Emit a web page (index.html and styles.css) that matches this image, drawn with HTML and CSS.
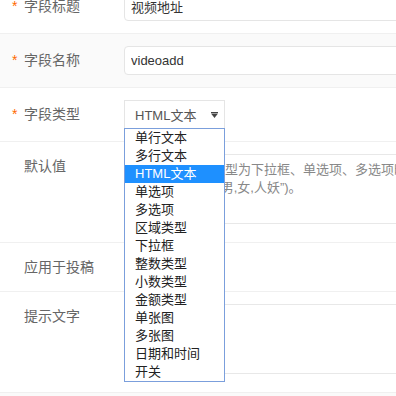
FILE: index.html
```html
<!DOCTYPE html>
<html lang="zh-CN">
<head>
<meta charset="UTF-8" />
<title>字段编辑</title>
<link rel="stylesheet" href="styles.css">
</head>
<body>

<div class="form">
  <div class="row first">
    <label class="lbl"><span class="req">*</span>字段标题</label>
    <div class="ctl"><input class="ipt" type="text" value="视频地址" /></div>
  </div>

  <div class="row alt">
    <label class="lbl"><span class="req">*</span>字段名称</label>
    <div class="ctl"><input class="ipt" type="text" value="videoadd" /></div>
  </div>

  <div class="row">
    <label class="lbl"><span class="req">*</span>字段类型</label>
    <div class="ctl">
      <div class="sel">
        <span class="sel-text">HTML文本</span>
        <svg class="sel-arrow" width="7" height="6" viewBox="0 0 7 6">
          <rect x="0" y="0" width="7" height="1" fill="#444" />
          <polygon points="0,1.5 7,1.5 3.5,6" fill="#444" />
        </svg>
        <ul class="options">
          <li>单行文本</li>
          <li>多行文本</li>
          <li class="active">HTML文本</li>
          <li>单选项</li>
          <li>多选项</li>
          <li>区域类型</li>
          <li>下拉框</li>
          <li>整数类型</li>
          <li>小数类型</li>
          <li>金额类型</li>
          <li>单张图</li>
          <li>多张图</li>
          <li>日期和时间</li>
          <li>开关</li>
        </ul>
      </div>
    </div>
  </div>

  <div class="row tall">
    <label class="lbl small">默认值</label>
    <div class="ctl">
      <textarea class="area" placeholder="例如：当字段类型为下拉框、单选项、多选项时&#10;用逗号分隔(如“男,女,人妖”)。"></textarea>
    </div>
  </div>

  <div class="row">
    <label class="lbl small">应用于投稿</label>
    <div class="ctl"><div class="blank"></div></div>
  </div>

  <div class="row tall">
    <label class="lbl small">提示文字</label>
    <div class="ctl"><textarea class="area"></textarea></div>
  </div>

  <div class="row alt">
    <label class="lbl small">&nbsp;</label>
    <div class="ctl"><div class="blank"></div></div>
  </div>
</div>

</body>
</html>
```

FILE: styles.css
```css
html, body {
  margin: 0;
  padding: 0;
  overflow: hidden;
  background: #fff;
}
body {
  font-family: "Liberation Sans", "Noto Sans CJK SC", sans-serif;
  font-size: 13px;
  color: #333;
}
.form {
  margin-top: -21px;
}
.row {
  display: flex;
  border-top: 1px solid #f0f0f0;
  padding: 12px 0;
}
.row.first {
  border-top: none;
  padding-top: 13px;
}
.row.alt {
  background: #fafafa;
}
.row.tall {
  padding-bottom: 18px;
}
.lbl {
  flex: 0 0 112px;
  padding-left: 12px;
  height: 29px;
  line-height: 29px;
  font-size: 14px;
  color: #666;
  white-space: nowrap;
}
.lbl.small {
  height: 24px;
  line-height: 24px;
}
.req {
  display: inline-block;
  width: 12px;
  color: #ff6a00;
  font-size: 14px;
}
.lbl.small {
  padding-left: 24px;
  flex-basis: 100px;
}
.ctl {
  flex: 1;
  min-width: 0;
}
.ipt {
  box-sizing: border-box;
  width: 400px;
  height: 29px;
  padding: 0 6px;
  border: 1px solid #e5e5e5;
  border-radius: 4px;
  background: #fff;
  font-family: inherit;
  font-size: 13px;
  color: #333;
  outline: none;
}
.sel {
  position: relative;
  box-sizing: border-box;
  width: 101px;
  height: 29px;
  border: 1px solid #e5e5e5;
  background: #fff;
  display: flex;
  align-items: center;
  padding-left: 10px;
  color: #555;
}
.sel-text {
  flex: 1;
}
.sel-arrow {
  margin-right: 6px;
}
.options {
  position: absolute;
  top: 27px;
  left: -1px;
  box-sizing: border-box;
  width: 101px;
  margin: 0;
  padding: 0;
  list-style: none;
  border: 1px solid #7b9fdc;
  background: #fff;
  z-index: 5;
}
.options li {
  height: 18px;
  line-height: 18px;
  padding-left: 10px;
  color: #222;
  white-space: nowrap;
}
.options li.active {
  background: #1e90ff;
  color: #fff;
}
.area {
  display: block;
  box-sizing: border-box;
  width: 400px;
  height: 70px;
  margin: 0;
  padding: 6px 9px;
  border: 1px solid #e8e8e8;
  border-right: none;
  border-radius: 0;
  resize: none;
  font-family: inherit;
  font-size: 13px;
  line-height: 18px;
  color: #333;
  outline: none;
}
.area::placeholder {
  color: #888;
}
.blank {
  height: 24px;
}
```
